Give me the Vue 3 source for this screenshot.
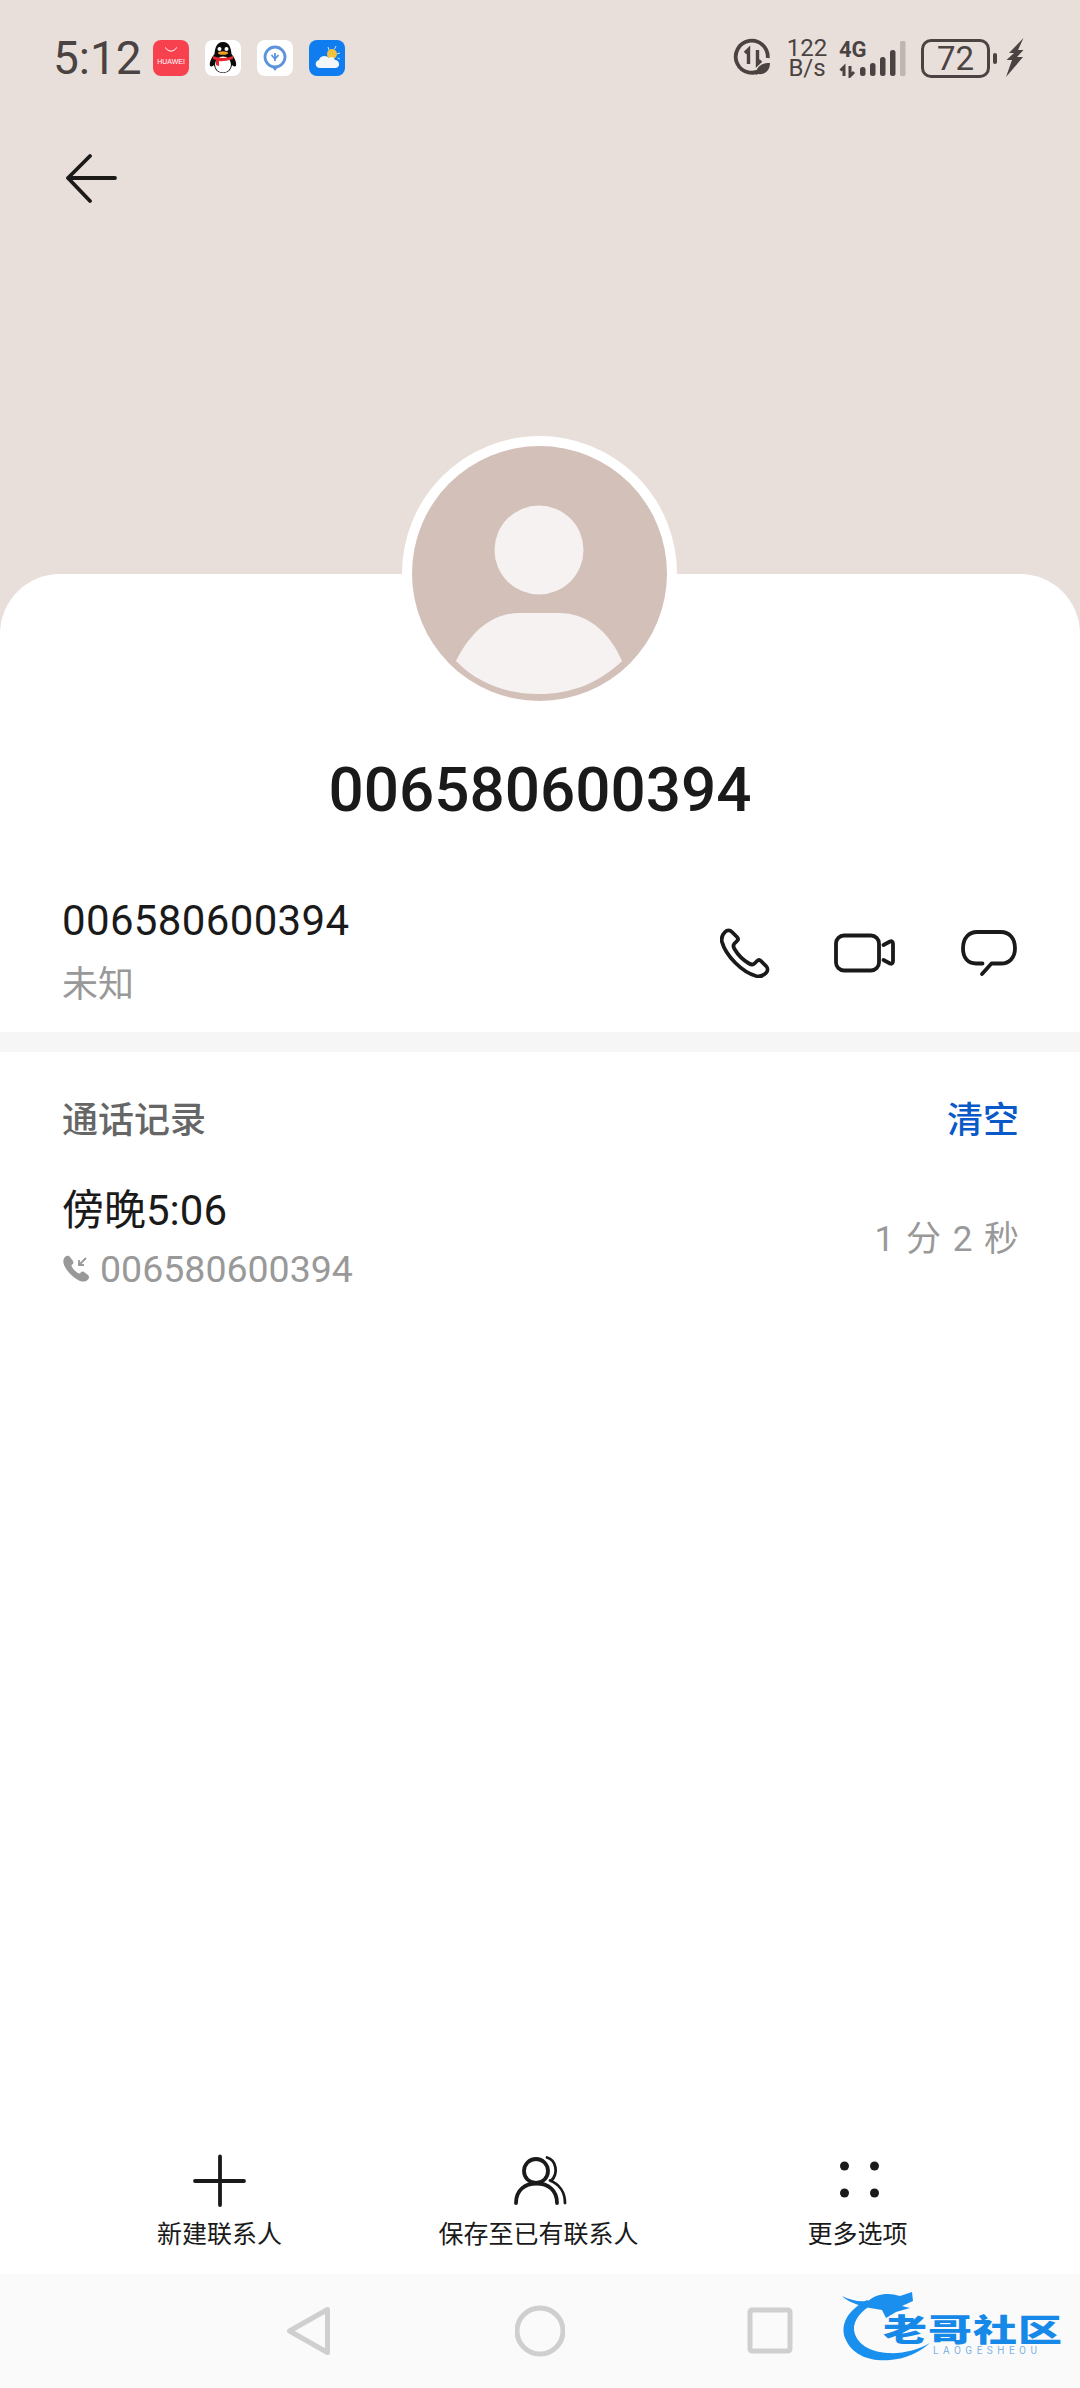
<script setup>
const number = '006580600394';
</script>

<template>
  <div class="page">
    <div class="top">
      <div class="status">
        <span class="time">5:12</span>
        <div class="apps">
          <svg width="36" height="36" viewBox="0 0 36 36">
            <rect width="36" height="36" rx="8" fill="#f8414f" />
            <path d="M12 7.500 Q18 15 24 7.500" fill="none" stroke="#fff" stroke-width="1" />
            <text x="18" y="23.500" text-anchor="middle" class="hw">HUAWEI</text>
          </svg>
          <svg width="36" height="36" viewBox="0 0 36 36">
            <rect width="36" height="36" rx="8" fill="#fff" />
            <path d="M18 2 C25 2 26 9 26.500 14 C29 17 32 22 31 26 C29 27 28 26 27 25 C26 31 22 33 18 33 C14 33 10 31 9 25 C8 26 7 27 5 26 C4 22 7 17 9.500 14 C10 9 11 2 18 2 Z" fill="#0b0b0b" />
            <ellipse cx="18" cy="24.500" rx="8" ry="8" fill="#fff" />
            <circle cx="14.500" cy="9" r="2" fill="#fff" />
            <circle cx="21.500" cy="9" r="2" fill="#fff" />
            <ellipse cx="18" cy="13" rx="5" ry="1.800" fill="#f0a020" />
            <path d="M8 16 Q18 20 28 16 L28 19 Q18 22 14 21 L14 26 L11 25 L11 20 L8 19 Z" fill="#e5262e" />
          </svg>
          <svg width="36" height="36" viewBox="0 0 36 36">
            <rect width="36" height="36" rx="8" fill="#fff" />
            <circle cx="18" cy="17" r="10" fill="none" stroke="#5b93dc" stroke-width="2.800" />
            <path d="M15 27 L18 31 L21 27 Z" fill="#5b93dc" />
            <path d="M14.500 15 L18 19 L21.500 15 M18 13 V21" fill="none" stroke="#5b93dc" stroke-width="1.800" />
          </svg>
          <svg width="36" height="36" viewBox="0 0 36 36">
            <rect width="36" height="36" rx="8" fill="#0f7cf0" />
            <path d="M19 7 L20 10 M27 6 L25.500 9 M31 13 L28 14 M31 19 L28.500 18" stroke="#cfe4f7" stroke-width="1" />
            <circle cx="23" cy="14" r="5" fill="#f2c23e" />
            <path d="M11 28 C6 28 5 21 10 20 C11 15 18 15 20 18 C22 16 25 17 26 20 C31 20 32 28 26 28 Z" fill="#f3f6f8" />
          </svg>
        </div>
        <div class="sys">
          <svg class="eco" width="40" height="40" viewBox="0 0 40 40">
            <path d="M29 31 A16 16 0 1 1 34.700 20" fill="none" stroke="#4a4341" stroke-width="3.800" />
            <path d="M12 15 L15.500 11.500 V26 M24.500 12 V26 L28 22.500" fill="none" stroke="#4a4341" stroke-width="3.400" />
            <path d="M23 37 C23 28 29 25 37 25 C37 33 31 37 25 36 Z" fill="#4a4341" />
          </svg>
          <div class="speed"><span>122</span><span>B/s</span></div>
          <svg class="signal" width="70" height="40" viewBox="0 0 70 40">
            <text x="1" y="19" class="net">4G</text>
            <path d="M6 38 V29 L2.500 32.500 M12 28 V38 L16 34" fill="none" stroke="#4a4341" stroke-width="3" />
            <rect x="22" y="29" width="5.500" height="9" rx="2.500" fill="#4a4341" />
            <rect x="32" y="25" width="5.500" height="13" rx="2.500" fill="#4a4341" />
            <rect x="42" y="19" width="5.500" height="19" rx="2.500" fill="#4a4341" />
            <rect x="52" y="12" width="5.500" height="26" rx="2.500" fill="#4a4341" />
            <rect x="62" y="3" width="5.500" height="35" rx="1.500" fill="#bdb6b2" />
          </svg>
          <div class="battery"><span>72</span></div>
          <span class="nub"></span>
          <svg class="bolt" width="18" height="40" viewBox="0 0 18 40">
            <path d="M17.500 0 L3 15 L8 15 L0.500 22 L6 22 L0 39 L17 19 L11 19 L17.500 12 L12 12 Z" fill="#4a4341" />
          </svg>
        </div>
      </div>
      <svg class="back" width="52" height="50" viewBox="0 0 52 50">
        <path d="M3 24 H50 M25 2 L3 24 L25 47" fill="none" stroke="#1c1a19" stroke-width="3.800" stroke-linecap="round" stroke-linejoin="round" />
      </svg>
    </div>

    <div class="card">
      <div class="avatar">
        <svg width="255" height="255" viewBox="0 0 255 255">
          <circle cx="127.500" cy="127.500" r="127.500" fill="#d3c0b9" />
          <circle cx="127" cy="104" r="44.500" fill="#f5f2f1" />
          <path d="M44 215 C60 183 82 167 108 167 H147 C173 167 196 183 210 215 C186 238 158 248 127 248 C96 248 66 238 44 215 Z" fill="#f5f2f1" />
        </svg>
      </div>

      <h1 class="name">{{ number }}</h1>

      <div class="contact">
        <div>
          <div class="num">{{ number }}</div>
          <div class="sub">未知</div>
        </div>
        <div class="actions">
          <svg width="50" height="50" viewBox="0 0 50 50">
            <path d="M5 4 C7 2 10 2 12 4 L17 9 C18.500 10.500 18 12 17 13 L14.500 15.500 C13 17 13 18.500 14.500 21 C18 27 23 32 29 35.500 C31.500 37 33 37 34.500 35.500 L37 33 C38 32 39.500 31.500 41 33 L46 38 C48 40 48 43 46 45 C43 48 40 49 36 48 C22 44 6 28 2 14 C1 10 2 7 5 4 Z" fill="none" stroke="#1a1a1a" stroke-width="3.800" stroke-linejoin="round" />
          </svg>
          <svg width="62" height="42" viewBox="0 0 62 42">
            <rect x="2" y="3.500" width="43" height="35" rx="8" fill="none" stroke="#1a1a1a" stroke-width="3.800" />
            <path d="M49.500 13 L56 9.500 Q59 8.500 59 12 V29 Q59 32.500 56 31.500 L49.500 28" fill="none" stroke="#1a1a1a" stroke-width="3.800" stroke-linejoin="round" stroke-linecap="round" />
          </svg>
          <svg width="58" height="50" viewBox="0 0 58 50">
            <path d="M22.500 35.500 H16 C8 35.500 3 30 3 20.500 C3 10 9 4 17 4 H41 C49 4 55 10 55 20.500 C55 30 49 35.500 41 35.500 H31.500 L22 46" fill="none" stroke="#1a1a1a" stroke-width="3.800" stroke-linecap="round" stroke-linejoin="round" />
          </svg>
        </div>
      </div>

      <div class="divider"></div>

      <div class="section">
        <span class="title">通话记录</span>
        <span class="clear">清空</span>
      </div>

      <div class="log">
        <div>
          <div class="when">傍晚5:06</div>
          <div class="peer">
            <svg width="28" height="28" viewBox="0 0 28 28">
              <path d="M3 2 C5 0 7 1 8 2 L11 6 C12 8 11 9 9.500 10 C9 12 15 19 18 18.500 C19 17 20 16 22 17 L26 20 C27.500 21.500 27.500 23 25.500 25 C23 27 20 27 16 25 C9 21 5 16 2 10 C1 7 1 4 3 2 Z" fill="#999" />
              <path d="M24 3 L17 10 M17 5 V10 H22" fill="none" stroke="#999" stroke-width="1.800" />
            </svg>
            <span>{{ number }}</span>
          </div>
        </div>
        <span class="dur">1 分 2 秒</span>
      </div>

      <div class="spacer"></div>

      <div class="bottom">
        <div class="item">
          <svg width="54" height="54" viewBox="0 0 54 54">
            <path d="M27 2.500 V51 M2 27 H51" fill="none" stroke="#1a1a1a" stroke-width="3.800" stroke-linecap="round" />
          </svg>
          <span>新建联系人</span>
        </div>
        <div class="item">
          <svg width="62" height="54" viewBox="-4 0 62 54">
            <circle cx="24" cy="17" r="12" fill="none" stroke="#1a1a1a" stroke-width="3.800" />
            <path d="M4 49 C4 36 13 29.500 24.500 29.500 C36 29.500 45 36 45 49" fill="none" stroke="#1a1a1a" stroke-width="3.800" stroke-linecap="round" />
            <path d="M35 3.500 C44 6 47 19 39 27 M38 26.500 C47 30 53 38 53 49" fill="none" stroke="#1a1a1a" stroke-width="2.800" stroke-linecap="round" />
          </svg>
          <span>保存至已有联系人</span>
        </div>
        <div class="item">
          <svg width="54" height="54" viewBox="0 0 54 54">
            <circle cx="13.500" cy="12" r="4.500" fill="#1a1a1a" />
            <circle cx="43.500" cy="12" r="4.500" fill="#1a1a1a" />
            <circle cx="13.500" cy="39" r="4.500" fill="#1a1a1a" />
            <circle cx="43.500" cy="39" r="4.500" fill="#1a1a1a" />
          </svg>
          <span>更多选项</span>
        </div>
      </div>

      <div class="nav">
        <svg width="50" height="54" viewBox="0 0 50 54">
          <path d="M4.500 27 L42.500 5.500 V48.500 Z" fill="none" stroke="#cfcfcf" stroke-width="5" stroke-linejoin="round" />
        </svg>
        <svg width="50" height="54" viewBox="0 0 50 54">
          <circle cx="25" cy="27" r="23" fill="none" stroke="#cfcfcf" stroke-width="5" />
        </svg>
        <svg width="50" height="54" viewBox="0 0 50 54">
          <rect x="5" y="6" width="40" height="41" rx="2" fill="none" stroke="#cfcfcf" stroke-width="5" />
        </svg>

        <div class="logo">
          <svg width="226" height="76" viewBox="0 0 226 76">
            <path d="M27 12 C8 22 0 36 5 50 C12 68 32 74 50 72 C66 71 80 64 90 55 C78 62 62 66 48 65 C30 64 16 56 14 42 C13 32 22 22 33 16 Z" fill="#1a90ee" />
            <path d="M2 8 C10 12 18 14 28 13 C36 6 48 4 60 8 L72 4 L73 13 L62 18 L70 20 L56 24 L46 30 L42 22 L30 20 C20 18 8 14 2 8 Z" fill="#1b8fee" />
            <text transform="translate(43 52.500) scale(1 0.7)" class="brand">老哥社区</text>
            <text x="93" y="66" class="brand-en">LAOGESHEOU</text>
          </svg>
        </div>
      </div>
    </div>
  </div>
</template>

<style>
html, body {
  margin: 0;
  background: #e8dfdb;
}
</style>

<style scoped>
.page {
  width: 1080px;
  height: 2388px;
  display: flex;
  flex-direction: column;
  overflow: hidden;
  background: #e8dfdb;
  font-family: Roboto, "Noto Sans CJK SC", sans-serif;
  color: #1a1a1a;
}
.top {
  height: 574px;
  flex-shrink: 0;
}
.status {
  display: flex;
  align-items: center;
  height: 40px;
  padding: 38px 56px 0 53px;
}
.time {
  font-size: 46px;
  line-height: 40px;
  color: #4a4341;
  width: 100px;
}
.apps {
  display: flex;
  gap: 16px;
}
.hw {
  font-family: "Liberation Sans", sans-serif;
  font-size: 7px;
  fill: #fff;
}
.sys {
  margin-left: auto;
  display: flex;
  align-items: center;
}
.speed {
  display: flex;
  flex-direction: column;
  align-items: center;
  width: 40px;
  margin-left: 14px;
  font-size: 24px;
  line-height: 20px;
  color: #4a4341;
}
.signal {
  margin-left: 11px;
}
.net {
  font-size: 22px;
  font-weight: 700;
  fill: #4a4341;
}
.battery {
  box-sizing: border-box;
  width: 69px;
  height: 39px;
  margin-left: 13px;
  border: 3px solid #4a4341;
  border-radius: 10px;
  display: flex;
  align-items: center;
  justify-content: center;
  font-size: 33px;
  color: #4a4341;
}
.nub {
  width: 4px;
  height: 11px;
  margin-left: 3px;
  border-radius: 2px;
  background: #4a4341;
}
.bolt {
  margin-left: 9px;
}
.back {
  display: block;
  margin: 76px 0 0 65px;
}
.card {
  flex: 1;
  position: relative;
  display: flex;
  flex-direction: column;
  background: #fff;
  border-radius: 60px 60px 0 0;
}
.avatar {
  position: absolute;
  left: 402px;
  top: -138px;
  width: 255px;
  height: 255px;
  border: 10px solid #fff;
  border-radius: 50%;
  background: #fff;
}
.avatar svg {
  display: block;
}
.name {
  margin: 0;
  padding-top: 176px;
  height: 80px;
  line-height: 80px;
  text-align: center;
  font-size: 62px;
  font-weight: 500;
}
.contact {
  display: flex;
  justify-content: space-between;
  align-items: center;
  height: 112px;
  padding: 67px 62px 23px;
}
.num {
  font-size: 42px;
  line-height: 50px;
  letter-spacing: 0.35px;
}
.sub {
  margin-top: 14px;
  font-size: 36px;
  line-height: 50px;
  color: #999;
}
.actions {
  display: flex;
  align-items: center;
  gap: 64px;
}
.divider {
  height: 20px;
  background: #f6f6f6;
}
.section {
  display: flex;
  justify-content: space-between;
  padding: 44px 61px 0 62px;
  font-size: 36px;
  line-height: 50px;
}
.title {
  color: #666;
  font-weight: 500;
}
.clear {
  color: #0a59c8;
  font-weight: 500;
}
.log {
  display: flex;
  justify-content: space-between;
  align-items: center;
  padding: 40px 61px 0 62px;
}
.when {
  font-size: 42px;
  line-height: 50px;
}
.peer {
  display: flex;
  align-items: center;
  gap: 10px;
  margin-top: 10px;
  font-size: 37.5px;
  line-height: 46px;
  color: #999;
}
.dur {
  margin-bottom: 8px;
  font-size: 35px;
  word-spacing: 3px;
  color: #999;
}
.spacer {
  flex: 1;
}
.bottom {
  display: grid;
  grid-template-columns: repeat(3, 319px);
  padding: 0 60px 21px;
}
.item {
  display: flex;
  flex-direction: column;
  align-items: center;
  gap: 9px;
  font-size: 25px;
  line-height: 36px;
}
.nav {
  position: relative;
  height: 114px;
  display: flex;
  align-items: center;
  justify-content: center;
  gap: 180px;
  background: #fafafa;
}
.logo {
  position: absolute;
  left: 840px;
  top: 14px;
  line-height: 0;
}
.brand {
  font-size: 44px;
  font-weight: 900;
  letter-spacing: 1px;
  fill: #1689e8;
}
.brand-en {
  font-size: 10px;
  letter-spacing: 4.500px;
  fill: #7fb4e4;
}
</style>
